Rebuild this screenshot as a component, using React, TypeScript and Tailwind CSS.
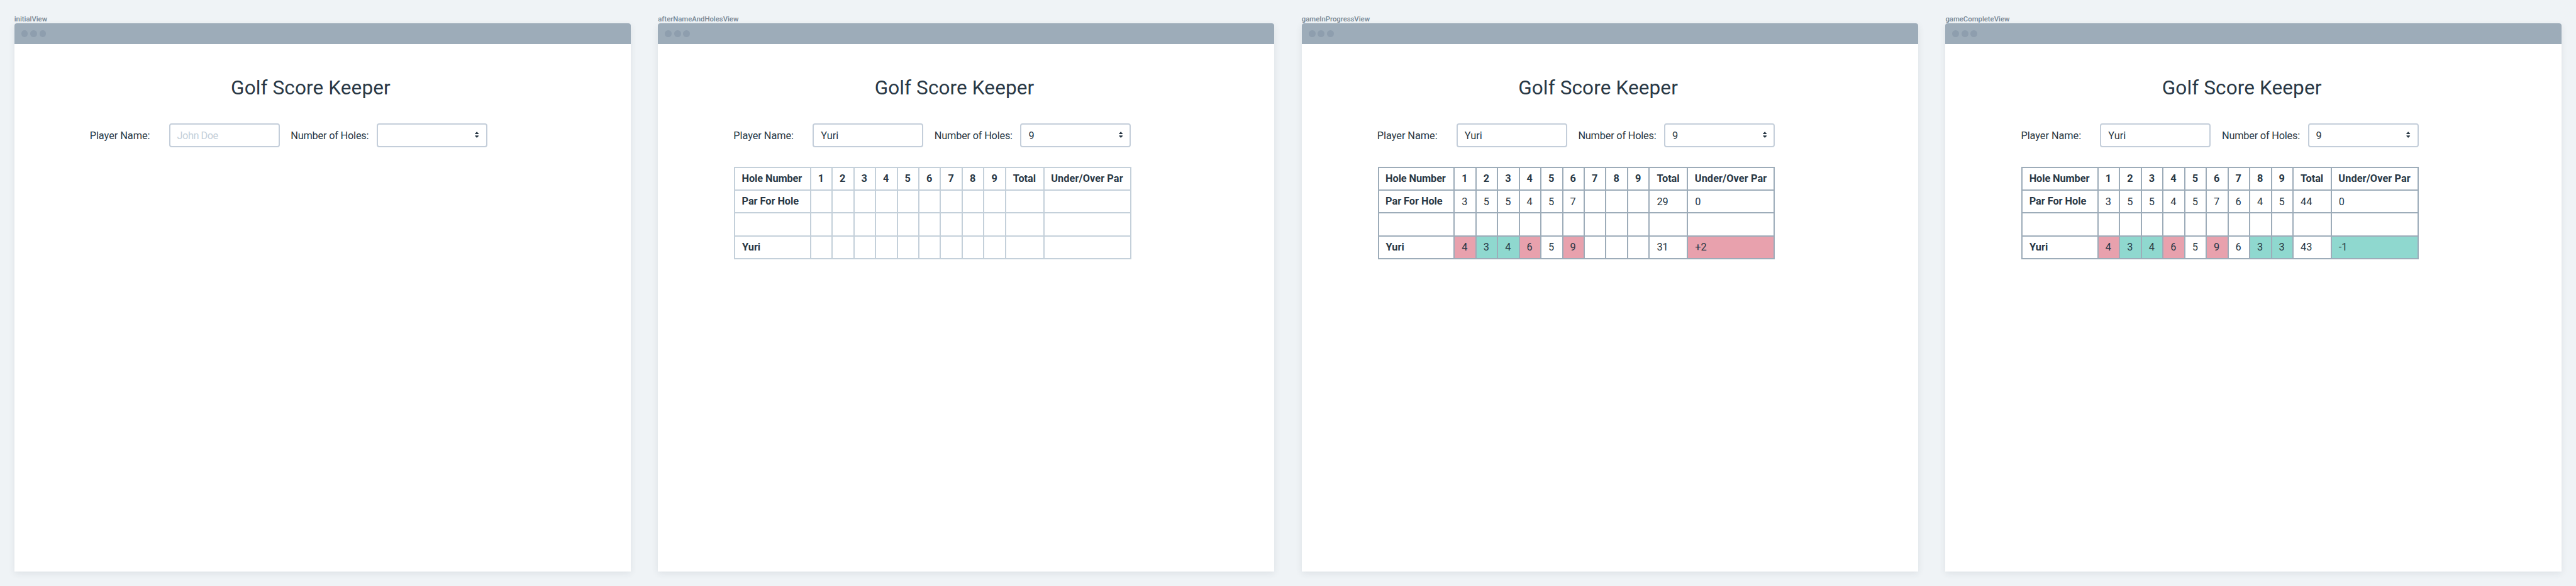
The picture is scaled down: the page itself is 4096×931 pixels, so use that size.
import type { ReactNode } from "react";

type Score = { value: string; result?: "over" | "under" };

type View = {
  name: string;
  player?: string;
  holes?: string;
  table?: {
    started: boolean;
    par: string[];
    parTotal: string;
    parDiff: string;
    scores: Score[];
    total: string;
    diff: Score;
  };
};

const HOLES = ["1", "2", "3", "4", "5", "6", "7", "8", "9"];
const BLANK = ["", "", "", "", "", "", "", "", ""];

const over = (value: string): Score => ({ value, result: "over" });
const under = (value: string): Score => ({ value, result: "under" });
const even = (value: string): Score => ({ value });

const VIEWS: View[] = [
  { name: "initialView" },
  {
    name: "afterNameAndHolesView",
    player: "Yuri",
    holes: "9",
    table: {
      started: false,
      par: BLANK,
      parTotal: "",
      parDiff: "",
      scores: BLANK.map(even),
      total: "",
      diff: even(""),
    },
  },
  {
    name: "gameInProgressView",
    player: "Yuri",
    holes: "9",
    table: {
      started: true,
      par: ["3", "5", "5", "4", "5", "7", "", "", ""],
      parTotal: "29",
      parDiff: "0",
      scores: [over("4"), under("3"), under("4"), over("6"), even("5"), over("9"), even(""), even(""), even("")],
      total: "31",
      diff: over("+2"),
    },
  },
  {
    name: "gameCompleteView",
    player: "Yuri",
    holes: "9",
    table: {
      started: true,
      par: ["3", "5", "5", "4", "5", "7", "6", "4", "5"],
      parTotal: "44",
      parDiff: "0",
      scores: [over("4"), under("3"), under("4"), over("6"), even("5"), over("9"), even("6"), under("3"), under("3")],
      total: "43",
      diff: under("-1"),
    },
  },
];

function SortArrows() {
  return (
    <svg className="mb-[1.4px] h-[10px] w-[6.4px]" viewBox="0 0 20 32" fill="#293845">
      <path d="M9 1.2 Q10 0 11 1.2 L19.2 10.4 Q20.4 13 17.5 13 L2.5 13 Q-.4 13 .8 10.4 Z" />
      <path d="M9 30.8 Q10 32 11 30.8 L19.2 22.6 Q20.4 20 17.5 20 L2.5 20 Q-.4 20 .8 22.6 Z" />
    </svg>
  );
}

function Field({ children }: { children?: ReactNode }) {
  return (
    <div className="flex h-[38.1px] w-[176px] items-center justify-between rounded-[4px] border-2 border-[#c4ceda] bg-white px-[11px]">
      {children}
    </div>
  );
}

function Heading({ text, className = "pl-[11px]" }: { text: string; className?: string }) {
  return <div className={`flex items-center bg-white font-bold ${className}`}>{text}</div>;
}

function Cell({ score }: { score: Score }) {
  const tone = score.result === "over" ? "bg-[#e8a1ad]" : score.result === "under" ? "bg-[#8fd8cf]" : "bg-white";
  return <div className={`flex items-center pl-[11px] pt-[1.4px] ${tone}`}>{score.value}</div>;
}

function ScoreTable({ view }: { view: View }) {
  const t = view.table!;
  return (
    <div
      className={`ml-[120.7px] mt-[30.7px] grid w-[631.7px] grid-cols-[118.7px_repeat(9,32.48px)_58.8px_135.9px] grid-rows-[repeat(4,34.3px)] gap-[2px] p-[2px] ${
        t.started ? "bg-[#9dacb9]" : "bg-[#c4d0da]"
      }`}
    >
      <Heading text="Hole Number" className="pl-[10.6px] tracking-[-0.1px]" />
      {HOLES.map((n) => (
        <Heading key={n} text={n} />
      ))}
      <Heading text="Total" className="pl-[11px] tracking-[-0.1px]" />
      <Heading text="Under/Over Par" className="pl-[10.6px] tracking-[0.08px]" />

      <Heading text="Par For Hole" className="pl-[10.6px] tracking-[-0.05px]" />
      {t.par.map((p, i) => (
        <Cell key={i} score={even(p)} />
      ))}
      <Cell score={even(t.parTotal)} />
      <Cell score={even(t.parDiff)} />

      {["", ...BLANK, "", ""].map((v, i) => (
        <Cell key={i} score={even(v)} />
      ))}

      <Heading text={view.player ?? ""} className="pl-[11px]" />
      {t.scores.map((s, i) => (
        <Cell key={i} score={s} />
      ))}
      <Cell score={even(t.total)} />
      <Cell score={t.diff} />
    </div>
  );
}

function Artboard({ view }: { view: View }) {
  return (
    <section className="flex w-[980px] shrink-0 flex-col">
      <div className="h-[14px] text-[11.33px] font-medium leading-[14px] text-[#748593]">{view.name}</div>
      <div className="flex h-[871px] flex-col rounded-t-[4px] bg-white shadow-[0_3px_11px_rgba(40,56,70,0.09)]">
        <div className="flex h-[32.7px] shrink-0 items-center gap-[3.6px] rounded-t-[4px] bg-[#9dacb9] pl-[10.9px]">
          <span className="size-[10.9px] rounded-full bg-[#8e9eae]" />
          <span className="size-[10.9px] rounded-full bg-[#8e9eae]" />
          <span className="size-[10.9px] rounded-full bg-[#8e9eae]" />
        </div>
        <h1 className="pl-[344.4px] pt-[51.2px] text-[31.5px] leading-[37px] tracking-[0.12px]">Golf Score Keeper</h1>
        <div className="mt-[37.9px] flex items-center pl-[120px]">
          <div className="w-[125.9px] pt-[1.6px] tracking-[-0.05px]">Player Name:</div>
          <Field>
            {view.player ? (
              <span className="pt-[1.6px]">{view.player}</span>
            ) : (
              <span className="pt-[1.6px] tracking-[-0.5px] text-[#c4d0da]">John Doe</span>
            )}
          </Field>
          <div className="ml-[17.7px] w-[136.6px] pt-[1.6px] tracking-[-0.21px]">Number of Holes:</div>
          <Field>
            <span className="pt-[1.6px]">{view.holes ?? ""}</span>
            <SortArrows />
          </Field>
        </div>
        {view.table && <ScoreTable view={view} />}
      </div>
    </section>
  );
}

export default function App() {
  return (
    <main className="flex h-[931px] w-[4096px] gap-[43.57px] overflow-hidden bg-[#eff3f6] pl-[22.7px] pt-[23.2px] font-['Roboto',sans-serif] text-[16.33px] leading-[20px] text-[#293845]">
      {VIEWS.map((view) => (
        <Artboard key={view.name} view={view} />
      ))}
    </main>
  );
}
